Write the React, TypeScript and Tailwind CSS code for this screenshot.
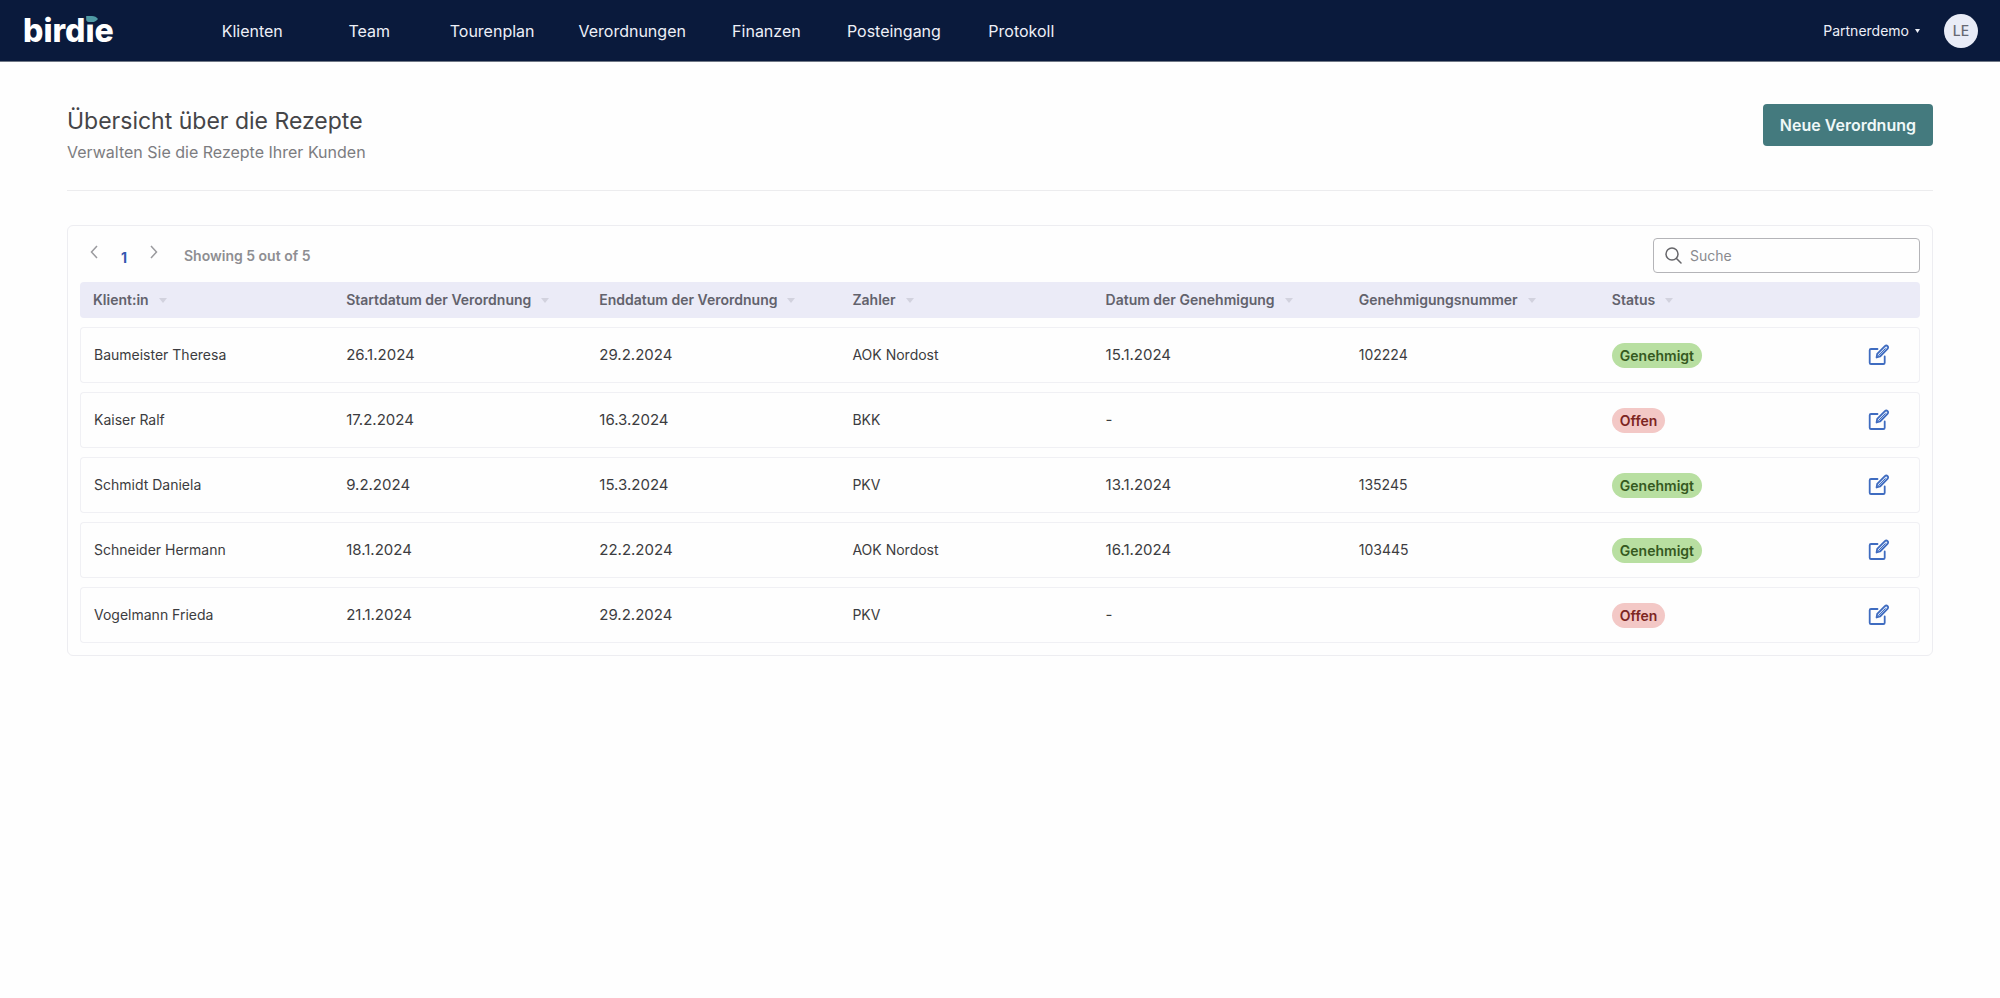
import React, { useState } from 'react';

type Status = 'Genehmigt' | 'Offen';

interface Prescription {
  client: string;
  start: string;
  end: string;
  payer: string;
  approvedAt: string;
  approvalNumber: string;
  status: Status;
}

const navItems = ['Klienten', 'Team', 'Tourenplan', 'Verordnungen', 'Finanzen', 'Posteingang', 'Protokoll'];

const columns = [
  'Klient:in',
  'Startdatum der Verordnung',
  'Enddatum der Verordnung',
  'Zahler',
  'Datum der Genehmigung',
  'Genehmigungsnummer',
  'Status',
];

const prescriptions: Prescription[] = [
  { client: 'Baumeister Theresa', start: '26.1.2024', end: '29.2.2024', payer: 'AOK Nordost', approvedAt: '15.1.2024', approvalNumber: '102224', status: 'Genehmigt' },
  { client: 'Kaiser Ralf', start: '17.2.2024', end: '16.3.2024', payer: 'BKK', approvedAt: '-', approvalNumber: '', status: 'Offen' },
  { client: 'Schmidt Daniela', start: '9.2.2024', end: '15.3.2024', payer: 'PKV', approvedAt: '13.1.2024', approvalNumber: '135245', status: 'Genehmigt' },
  { client: 'Schneider Hermann', start: '18.1.2024', end: '22.2.2024', payer: 'AOK Nordost', approvedAt: '16.1.2024', approvalNumber: '103445', status: 'Genehmigt' },
  { client: 'Vogelmann Frieda', start: '21.1.2024', end: '29.2.2024', payer: 'PKV', approvedAt: '-', approvalNumber: '', status: 'Offen' },
];

const statusStyles: Record<Status, string> = {
  Genehmigt: 'bg-[#b8dfa1] text-[#35591f]',
  Offen: 'bg-[#f3c8c6] text-[#7d2522]',
};

const Logo: React.FC = () => (
  <a href="#" className="relative text-[32px] leading-10 font-extrabold text-white">
    birdie
    {/* leaf over the second i */}
    <svg className="absolute top-1 left-[62px]" width="14" height="10" viewBox="0 0 14 10" aria-hidden="true">
      <path d="M0.500 0h9.500v9.500H0.500z" fill="#0a1a3c" />
      <path d="M1.200 1h5.800c2.600 0 4.600 1.200 6 2.900C11.500 5.800 9.500 7 7 7H3.600C2.200 7 1.200 6 1.200 4.600z" fill="#4f9aa5" />
    </svg>
  </a>
);

const EditIcon: React.FC = () => (
  <svg width="22" height="22" viewBox="0 0 22 22" fill="none" stroke="#3f6cc0" strokeWidth="1.8" strokeLinejoin="round" strokeLinecap="round" aria-hidden="true">
    <path d="M9.500 5H3C2.200 5 1.700 5.500 1.700 6.300v12.400c0 .8.500 1.300 1.300 1.300h12.400c.8 0 1.300-.5 1.300-1.300V12.500" />
    <path d="M8.600 13.500l.6-3.600 7.700-7.700c.8-.8 2-.8 2.700-.1.700.7.700 1.900-.1 2.700l-7.500 7.700z" fill="#dce6f8" />
    <path d="M10.500 11.500l6.800-6.800" strokeWidth="1" />
  </svg>
);

const Chevron: React.FC<{ d: string }> = ({ d }) => (
  <svg width="8" height="14" viewBox="0 0 8 14" fill="none" stroke="#9a9a9e" strokeWidth="1.5" aria-hidden="true">
    <path d={d} />
  </svg>
);

const Header: React.FC = () => (
  <header className="flex items-center justify-between bg-[#0a1a3c] border-b border-[#6f7785] h-[62px] pl-[23px] pr-[22px]">
    <div className="flex items-center">
      <Logo />
      <nav className="flex items-center ml-20">
        {navItems.map((item) => (
          <a key={item} href="#" className="min-w-[117px] px-[22px] text-center text-base text-[#eef0f8]">
            {item}
          </a>
        ))}
      </nav>
    </div>
    <div className="flex items-center gap-6">
      <button className="flex items-center gap-1.5 text-sm text-[#eef0f8]">
        Partnerdemo
        <svg width="5" height="4" viewBox="0 0 5 4" fill="currentColor" aria-hidden="true">
          <path d="M0 0h5L2.500 4z" />
        </svg>
      </button>
      <button className="size-[34px] rounded-full bg-[#e9ecf7] text-sm font-medium text-[#666974]">LE</button>
    </div>
  </header>
);

const App: React.FC = () => {
  const [search, setSearch] = useState('');
  const rows = prescriptions.filter((p) => p.client.toLowerCase().includes(search.toLowerCase()));

  return (
    <div className="min-h-screen bg-[#fefefe] font-['Inter',sans-serif] text-[#3c3c40]">
      <Header />

      <main className="px-[67px] pt-[42px]">
        <div className="flex items-start justify-between border-b border-[#ececee] pb-6">
          <div>
            <h1 className="text-[23px] leading-[34px] text-[#454548]">Übersicht über die Rezepte</h1>
            <p className="text-base leading-7 text-[#7c7c80]">Verwalten Sie die Rezepte Ihrer Kunden</p>
          </div>
          <button className="h-[42px] rounded bg-[#447a7e] px-[17px] text-base font-semibold text-[#eff8f8]">
            Neue Verordnung
          </button>
        </div>

        <section className="mt-[34px] rounded-md border border-[#ededf1] px-3 pt-3 pb-[3px]">
          <div className="flex items-center justify-between">
            <div className="flex items-center pl-2">
              <button aria-label="Zurück" className="mb-2 px-0.5">
                <Chevron d="M7 1L1.500 7 7 13" />
              </button>
              <span className="w-12 pt-1 text-center text-sm font-bold text-[#3558b0]">1</span>
              <button aria-label="Weiter" className="mb-2 px-0.5">
                <Chevron d="M1 1l5.500 6L1 13" />
              </button>
              <span className="ml-6 text-sm font-semibold text-[#8e8e92]">Showing 5 out of 5</span>
            </div>
            <label className="flex h-[35px] w-[267px] items-center gap-2 rounded border border-[#b4b4b8] px-[11px]">
              <svg width="17" height="17" viewBox="0 0 17 17" fill="none" stroke="#66666a" strokeWidth="1.500" strokeLinecap="round" aria-hidden="true">
                <circle cx="7" cy="7" r="6" />
                <path d="M11.500 11.500L16 16" />
              </svg>
              <input
                type="text"
                aria-label="Suche"
                placeholder="Suche"
                value={search}
                onChange={(e) => setSearch(e.target.value)}
                className="min-w-0 flex-1 text-sm outline-none placeholder:text-[#8a8a8e]"
              />
            </label>
          </div>

          <table className="w-full table-fixed border-separate border-spacing-x-0 border-spacing-y-[9px] text-left">
            <thead>
              <tr className="h-9">
                {columns.map((column) => (
                  <th key={column} className="bg-[#ebebf7] px-[13px] text-sm font-semibold text-[#62626c] first:rounded-l">
                    <span className="flex items-center gap-2.5">
                      {column}
                      <svg width="8" height="5" viewBox="0 0 8 5" fill="#d2d2de" aria-hidden="true">
                        <path d="M0 0h8L4 5z" />
                      </svg>
                    </span>
                  </th>
                ))}
                <th className="w-[68px] rounded-r bg-[#ebebf7]" aria-label="Bearbeiten" />
              </tr>
            </thead>
            <tbody>
              {rows.map((row) => (
                <tr key={row.client} className="h-14 *:border-y *:border-[#f0f0f4]">
                  <td className="rounded-l border-l px-[13px] text-sm">{row.client}</td>
                  <td className="px-[13px] text-[15px]">{row.start}</td>
                  <td className="px-[13px] text-[15px]">{row.end}</td>
                  <td className="px-[13px] text-sm">{row.payer}</td>
                  <td className="px-[13px] text-[15px]">{row.approvedAt}</td>
                  <td className="px-[13px] text-sm">{row.approvalNumber}</td>
                  <td className="px-[13px]">
                    <span className={`inline-block rounded-full px-2 align-middle text-sm leading-[25px] font-semibold ${statusStyles[row.status]}`}>
                      {row.status}
                    </span>
                  </td>
                  <td className="rounded-r border-r pl-4">
                    <button aria-label={`${row.client} bearbeiten`} className="block">
                      <EditIcon />
                    </button>
                  </td>
                </tr>
              ))}
            </tbody>
          </table>
        </section>
      </main>
    </div>
  );
};

export default App;
